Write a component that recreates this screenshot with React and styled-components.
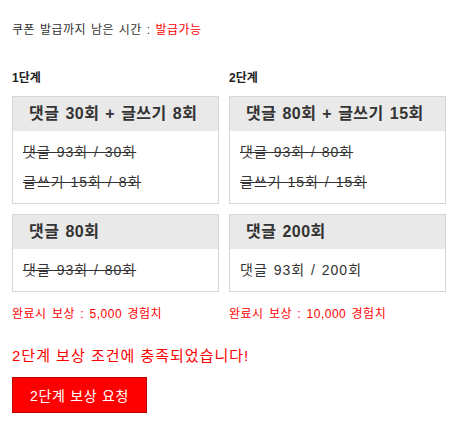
import styled, { createGlobalStyle } from "styled-components";

const GlobalStyle = createGlobalStyle`
  body {
    margin: 0;
    background: #fff;
    font-family: "Liberation Sans", "Noto Sans CJK KR", sans-serif;
    color: #333;
  }
`;

const stages = [
  {
    title: "1단계",
    reward: "완료시 보상 : 5,000 경험치",
    cards: [
      {
        head: "댓글 30회 + 글쓰기 8회",
        lines: [
          { text: "댓글 93회 / 30회", done: true },
          { text: "글쓰기 15회 / 8회", done: true },
        ],
      },
      {
        head: "댓글 80회",
        lines: [{ text: "댓글 93회 / 80회", done: true }],
      },
    ],
  },
  {
    title: "2단계",
    reward: "완료시 보상 : 10,000 경험치",
    cards: [
      {
        head: "댓글 80회 + 글쓰기 15회",
        lines: [
          { text: "댓글 93회 / 80회", done: true },
          { text: "글쓰기 15회 / 15회", done: true },
        ],
      },
      {
        head: "댓글 200회",
        lines: [{ text: "댓글 93회 / 200회", done: false }],
      },
    ],
  },
];

const App = () => {
  return (
    <Page>
      <GlobalStyle />
      <Timer>
        쿠폰 발급까지 남은 시간 : <Red>발급가능</Red>
      </Timer>
      <Stages>
        {stages.map((stage, i) => (
          <Column key={stage.title} $first={i === 0}>
            <StageTitle>{stage.title}</StageTitle>
            {stage.cards.map((card) => (
              <Card key={card.head}>
                <CardHead>{card.head}</CardHead>
                <CardBody>
                  {card.lines.map((line) => (
                    <Line key={line.text} $done={line.done}>
                      {line.text}
                    </Line>
                  ))}
                </CardBody>
              </Card>
            ))}
            <Reward>{stage.reward}</Reward>
          </Column>
        ))}
      </Stages>
      <Notice>2단계 보상 조건에 충족되었습니다!</Notice>
      <RequestButton>2단계 보상 요청</RequestButton>
    </Page>
  );
};

export default App;

const Page = styled.div`
  padding: 21px 12px 0;
  width: 434px;
`;

const Timer = styled.div`
  font-size: 12px;
  line-height: 18px;
  letter-spacing: 0.5px;
  word-spacing: 1px;
  color: #333;
`;

const Red = styled.span`
  color: #ff0000;
`;

const Stages = styled.div`
  display: grid;
  grid-template-columns: 217px 217px;
  margin-top: 30px;
`;

const Column = styled.div`
  padding-right: ${(p) => (p.$first ? "10px" : "0")};
  display: flex;
  flex-direction: column;
  gap: 10px;
`;

const StageTitle = styled.div`
  font-size: 12px;
  font-weight: bold;
  line-height: 18px;
  color: #222;
  margin-bottom: -1px;
`;

const Card = styled.div`
  border: 1px solid #d6d6d6;
  background: #fff;
`;

const CardHead = styled.div`
  background: #e9e9e9;
  height: 34px;
  line-height: 34px;
  padding-left: 16px;
  font-size: 16px;
  font-weight: bold;
  letter-spacing: 0.5px;
  word-spacing: 1px;
  color: #333;
`;

const CardBody = styled.div`
  padding: 6px 10px;
`;

const Line = styled.div`
  font-size: 14px;
  line-height: 30px;
  letter-spacing: 1px;
  word-spacing: 1px;
  color: #333;
  text-decoration: ${(p) => (p.$done ? "line-through" : "none")};
`;

const Reward = styled.div`
  font-size: 12px;
  line-height: 18px;
  letter-spacing: 0.5px;
  word-spacing: 1.5px;
  color: #ff0000;
  margin-top: 3px;
`;

const Notice = styled.div`
  margin-top: 23px;
  font-size: 15px;
  line-height: 20px;
  letter-spacing: 1px;
  color: #ff0000;
`;

const RequestButton = styled.button`
  margin-top: 11px;
  width: 135px;
  height: 36px;
  background: #ff0000;
  border: 1px solid #c00000;
  color: #fff;
  font-family: "Liberation Sans", "Noto Sans CJK KR", sans-serif;
  font-size: 14px;
  letter-spacing: 0.7px;
  padding: 0;
  cursor: pointer;
`;
